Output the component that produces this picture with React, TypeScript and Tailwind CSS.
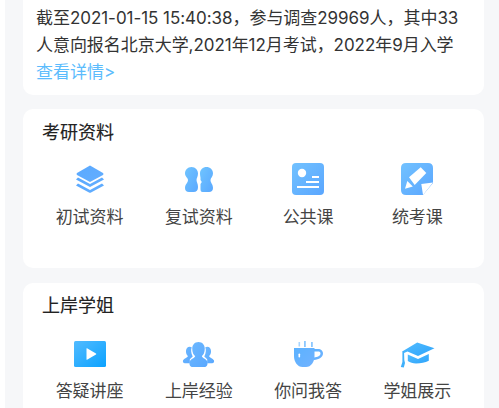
import React from "react";

const font = { fontFamily: 'Inter, "Noto Sans CJK SC", sans-serif' };

const Grad = ({ id, from = "#6ec1ff", to = "#5aa5ff" }: { id: string; from?: string; to?: string }) => (
  <defs>
    <linearGradient id={id} x1="0" y1="0" x2="1" y2="1">
      <stop offset="0" stopColor={from} />
      <stop offset="1" stopColor={to} />
    </linearGradient>
  </defs>
);

const Layers = () => (
  <svg width="34" height="34" viewBox="0 0 34 34">
    <Grad id="a" from="#5aa9ff" to="#63aeff" />
    <path d="M17 3.5 L30 11 Q31 12 30 13 L17 20 L4 13 Q3 12 4 11Z" fill="url(#a)" />
    <path d="M5 15.5 L17 22 L29 15.5 L31 17.5 L17 25 L3 17.5Z" fill="url(#a)" />
    <path d="M5 21.5 L17 28 L29 21.5 L31 23.5 L18 30.5 Q17 31 16 30.5 L3 23.5Z" fill="url(#a)" />
  </svg>
);

const Peanuts = () => (
  <svg width="30" height="30" viewBox="0 0 30 30">
    <Grad id="b" from="#6fc4ff" to="#5aa8ff" />
    <path d="M7.5 3 C11.5 3 14 6 14 9.5 C14 12.5 12.5 14 12.5 16 C12.5 18 14 19.5 14 23 C14 26.5 12.5 28 9.5 28 L5 28 C2.5 28 1 26.5 1 24 C1 20 4 19 4 16 C4 14 1 12.5 1 9.5 C1 6 3.5 3 7.5 3Z" fill="url(#b)" />
    <path d="M22.5 3 C26 3 29 5.5 29 9.5 C29 12.5 26.5 14 26.5 16 C26.5 19 29 20 29 24 C29 26.5 27.5 28 25 28 L18.5 28 C17 28 16.5 27 16.5 25 V20 L17.8 18 L16.5 16 V14 C16.5 13 16 11.5 16 9.5 C16 5.5 19 3 22.5 3Z" fill="url(#b)" />
  </svg>
);

const Card = () => (
  <svg width="34" height="34" viewBox="0 0 34 34">
    <Grad id="c" from="#72c2ff" to="#5aa6ff" />
    <rect x="1" y="1" width="32" height="32" rx="4" fill="url(#c)" />
    <circle cx="11" cy="11" r="4.2" fill="#fff" />
    <rect x="21" y="14" width="7" height="2" fill="#fff" />
    <rect x="15" y="19" width="13" height="2" fill="#fff" />
    <rect x="6" y="24" width="22" height="2" fill="#fff" />
  </svg>
);

const Pencil = () => (
  <svg width="34" height="34" viewBox="0 0 34 34">
    <Grad id="d" from="#72c2ff" to="#5aa6ff" />
    <path d="M6 1 H28 Q33 1 33 6 V21 L23 33 H6 Q1 33 1 28 V6 Q1 1 6 1Z" fill="url(#d)" />
    <path d="M9 15.3 L20.7 5.3 L26.3 11 L14.7 23Z" fill="#fff" />
    <path d="M7.3 19 L12.8 24.5 L5 26.8Z" fill="#fff" />
    <path d="M21.3 22 L33 20.5 L23 33Z" fill="#fff" />
  </svg>
);

const Play = () => (
  <svg width="34" height="28" viewBox="0 0 34 28">
    <Grad id="e" from="#52bbff" to="#0ba2ff" />
    <rect x="1" y="1" width="32" height="26" rx="1.5" fill="url(#e)" />
    <path d="M13.5 8.5 Q13.5 8 14 8.2 L23 13.4 Q23.6 14 23 14.6 L14 19.8 Q13.5 20 13.5 19.5Z" fill="#fff" />
  </svg>
);

const People = () => (
  <svg width="33" height="27" viewBox="0 0 34 28">
    <Grad id="f" from="#6cb8ff" to="#5aa8ff" />
    <path d="M8 6 C5.5 6 4 8 4 10.5 C4 13 5 14.5 6 15.5 C6 17 2 18 1 20 C0.5 21.5 1 23 3 23 L8 23 L8 19 L11 16 C9 12 9 9 10 6.5Z" fill="url(#f)" />
    <path d="M26 6 C28.5 6 30 8 30 10.5 C30 13 29 14.5 28 15.5 C28 17 32 18 33 20 C33.5 21.5 33 23 31 23 L26 23 L26 19 L23 16 C25 12 25 9 24 6.5Z" fill="url(#f)" />
    <path d="M17 1 C21 1 23.5 4 23.5 8 C23.5 12 22 14.5 20.5 15.5 C20.5 17.5 25 18.5 26 21 C27 24 26 27 23 27 L11 27 C8 27 7 24 8 21 C9 18.5 13.5 17.5 13.5 15.5 C12 14.5 10.5 12 10.5 8 C10.5 4 13 1 17 1Z" fill="url(#f)" />
  </svg>
);

const Cup = () => (
  <svg width="31" height="26" viewBox="0 0 31 26">
    <Grad id="g" from="#5cb2ff" to="#70b2ff" />
    <rect x="5.5" y="1" width="1.6" height="4.5" fill="#a8d6ff" />
    <rect x="11" y="0" width="1.8" height="6" fill="#8cc8ff" />
    <rect x="18" y="1" width="1.8" height="5" fill="#8cc8ff" />
    <path d="M1 7 H21.5 V15 C21.5 21 18 26 13 26 H9.5 C4.5 26 1 21 1 15Z" fill="url(#g)" />
    <path d="M21 8 H25 C28 8 30 10 30 12.5 C30 16 26 18.5 21 19 L21 16.5 C24.5 16 27.5 15 27.5 12.5 C27.5 11 26.5 10.5 25 10.5 H21Z" fill="url(#g)" />
    <rect x="5.5" y="12.5" width="1.6" height="4" rx="0.8" fill="#fff" />
  </svg>
);

const Cap = () => (
  <svg width="36" height="30" viewBox="0 0 36 30">
    <Grad id="h" from="#52bcff" to="#2ea4fb" />
    <path d="M18.2 3.5 L35.5 9.3 L19 17 L8.5 12.5 L5 14 L4 12Z" fill="url(#h)" />
    <path d="M8.8 15.5 L19 20 L29.8 15 V21.7 C26 23.5 22 24.5 17 24.5 C14 24.5 11 23.5 8.8 22Z" fill="url(#h)" />
    <path d="M3.4 12 H5 L5.3 21 L6 24 L4.8 28.5 L1.8 28 L3.4 23Z" fill="#3fb0fb" />
  </svg>
);

const Item = ({ icon, label, tight }: { icon: React.ReactNode; label: string; tight?: boolean }) => (
  <div className="flex flex-col items-center">
    <div className="flex h-[34px] items-center justify-center">{icon}</div>
    <div className={tight ? "mt-[8px] text-[17px] leading-[24px] text-[#444444]" : "mt-[9px] text-[17px] leading-[24px] text-[#444444]"}>{label}</div>
  </div>
);

export default function App() {
  return (
    <div style={font} className="h-[408px] w-[499px] overflow-hidden bg-white pl-[5px]">
      <div className="h-full bg-[#f6f7f9] pl-[18px] pr-[15px]">
        <div className="flex h-[95px] flex-col justify-end rounded-b-[10px] bg-white pb-[9px] pl-[13px]">
          <p className="whitespace-nowrap text-[17px] leading-[27px] tracking-[-0.045px] text-[#333333]">
            截至2021-01-15 15:40:38，参与调查29969人，其中33
            <br />
            人意向报名北京大学,2021年12月考试，2022年9月入学
          </p>
          <p className="text-[17px] leading-[27px] text-[#5cbcfd]">查看详情&gt;</p>
        </div>

        <section className="mt-[14px] h-[159px] rounded-[10px] bg-white pt-[11px]">
          <h2 className="pl-[19px] text-[18px] font-normal leading-[26px] text-[#222222] [-webkit-text-stroke:0.15px_#222222]">考研资料</h2>
          <div className="mt-[16px] grid grid-cols-4 px-[12px]">
            <Item icon={<Layers />} label="初试资料" />
            <Item icon={<Peanuts />} label="复试资料" />
            <Item icon={<Card />} label="公共课" />
            <Item icon={<Pencil />} label="统考课" />
          </div>
        </section>

        <section className="mt-[15px] h-[159px] rounded-[10px] bg-white pt-[10px]">
          <h2 className="pl-[19px] text-[18px] font-normal leading-[26px] text-[#222222] [-webkit-text-stroke:0.15px_#222222]">上岸学姐</h2>
          <div className="mt-[18px] grid grid-cols-4 px-[12px]">
            <Item tight icon={<Play />} label="答疑讲座" />
            <Item tight icon={<People />} label="上岸经验" />
            <Item tight icon={<Cup />} label="你问我答" />
            <Item tight icon={<Cap />} label="学姐展示" />
          </div>
        </section>
      </div>
    </div>
  );
}
